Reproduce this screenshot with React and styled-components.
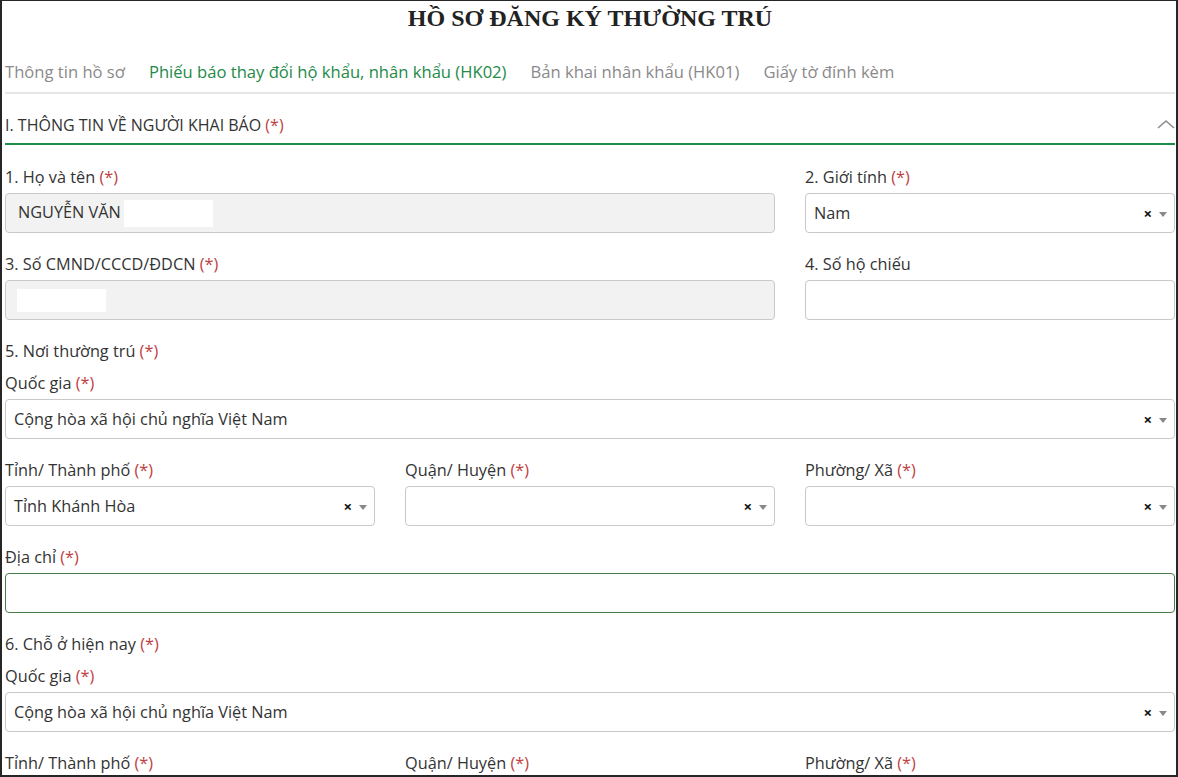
import React from 'react'
import styled, { createGlobalStyle } from 'styled-components'

const GlobalStyle = createGlobalStyle`
  * { box-sizing: border-box; }
  body {
    margin: 0;
    background: #fff;
    font-family: 'Open Sans', 'Noto Sans', sans-serif;
  }
`

const Frame = styled.div`
  width: 1178px;
  height: 777px;
  overflow: hidden;
  border: 2px solid #262626;
  border-width: 1px 2px 2px 2px;
  padding: 0 1px 0 3px;
  background: #fff;
`

const Title = styled.h1`
  margin: 0;
  height: 34px;
  line-height: 34px;
  text-align: center;
  font-family: 'Liberation Serif', 'DejaVu Serif', serif;
  font-weight: 700;
  font-size: 24px;
  color: #222;
`

const Tabs = styled.div`
  display: flex;
  gap: 24px;
  height: 59px;
  padding-top: 15px;
  align-items: center;
  border-bottom: 2px solid #e6e6e6;
`

const Tab = styled.div`
  font-size: 16.6px;
  color: ${(p) => (p.active ? '#248a47' : '#8a8a8a')};
`

const SectionHead = styled.div`
  display: flex;
  justify-content: space-between;
  align-items: flex-end;
  height: 51px;
  padding-bottom: 7px;
  border-bottom: 2px solid #1f8c4b;
  font-size: 16px;
  color: #333;
`

const Chevron = styled.svg`
  margin-bottom: 7px;
`

const Req = styled.span`
  color: #c0403f;
`

const Grid = styled.div`
  display: grid;
  grid-template-columns: repeat(3, 370px);
  column-gap: 30px;
  row-gap: 20px;
  padding-top: 21px;
`

const Field = styled.div`
  grid-column: span ${(p) => p.span || 1};
  display: flex;
  flex-direction: column;
  gap: 5px;
`

const Group = styled.div`
  grid-column: span 3;
  display: flex;
  flex-direction: column;
  gap: 10px;
`

const Label = styled.div`
  height: 22px;
  line-height: 22px;
  font-size: 16.3px;
  color: #333;
`

const Box = styled.div`
  height: 40px;
  display: flex;
  align-items: center;
  border: 1px solid ${(p) => (p.focus ? '#4b7a4b' : '#c9c9c9')};
  border-radius: 4px;
  background: ${(p) => (p.disabled ? '#f2f2f2' : '#fff')};
  padding: 0 ${(p) => (p.disabled ? '12px' : '8px')};
  font-size: 16.3px;
  color: #333;
`

const Value = styled.span`
  flex: 1;
  white-space: nowrap;
`

const Redact = styled.span`
  display: inline-block;
  vertical-align: middle;
  background: #fff;
  width: ${(p) => p.w}px;
  height: ${(p) => p.h}px;
  margin-left: ${(p) => p.ml || 0}px;
`

const Controls = styled.span`
  display: flex;
  align-items: center;
  gap: 7px;
  margin-right: -1px;
`

const Clear = styled.span`
  font-size: 15px;
  font-weight: 700;
  color: #111;
  line-height: 1;
`

const Caret = styled.span`
  width: 0;
  height: 0;
  border-left: 4px solid transparent;
  border-right: 4px solid transparent;
  border-top: 5px solid #888;
  margin-top: 2px;
`

const L = ({ text, req }) => (
  <Label>
    {text}
    {req && <Req> (*)</Req>}
  </Label>
)

const Select = ({ value }) => (
  <Box>
    <Value>{value}</Value>
    <Controls>
      <Clear>×</Clear>
      <Caret />
    </Controls>
  </Box>
)

const AddressBlock = ({ title, province }) => (
  <>
    <Group>
      <L text={title} req />
      <Field>
        <L text="Quốc gia" req />
        <Select value="Cộng hòa xã hội chủ nghĩa Việt Nam" />
      </Field>
    </Group>
    <Field>
      <L text="Tỉnh/ Thành phố" req />
      <Select value={province} />
    </Field>
    <Field>
      <L text="Quận/ Huyện" req />
      <Select value="" />
    </Field>
    <Field>
      <L text="Phường/ Xã" req />
      <Select value="" />
    </Field>
  </>
)

export default function App() {
  return (
    <Frame>
      <GlobalStyle />
      <Title>HỒ SƠ ĐĂNG KÝ THƯỜNG TRÚ</Title>
      <Tabs>
        <Tab>Thông tin hồ sơ</Tab>
        <Tab active>Phiếu báo thay đổi hộ khẩu, nhân khẩu (HK02)</Tab>
        <Tab>Bản khai nhân khẩu (HK01)</Tab>
        <Tab>Giấy tờ đính kèm</Tab>
      </Tabs>
      <SectionHead>
        <span>
          I. THÔNG TIN VỀ NGƯỜI KHAI BÁO<Req> (*)</Req>
        </span>
        <Chevron width="18" height="10" viewBox="0 0 18 10">
          <polyline points="1,9 9,2 17,9" fill="none" stroke="#8d8d8d" strokeWidth="1.6" />
        </Chevron>
      </SectionHead>
      <Grid>
        <Field span={2}>
          <L text="1. Họ và tên" req />
          <Box disabled>
            <Value>
              NGUYỄN VĂN
              <Redact w={89} h={27} ml={3} />
            </Value>
          </Box>
        </Field>
        <Field>
          <L text="2. Giới tính" req />
          <Select value="Nam" />
        </Field>
        <Field span={2}>
          <L text="3. Số CMND/CCCD/ĐDCN" req />
          <Box disabled>
            <Value>
              <Redact w={89} h={23} ml={-1} />
            </Value>
          </Box>
        </Field>
        <Field>
          <L text="4. Số hộ chiếu" />
          <Box />
        </Field>
        <AddressBlock title="5. Nơi thường trú" province="Tỉnh Khánh Hòa" />
        <Field span={3}>
          <L text="Địa chỉ" req />
          <Box focus />
        </Field>
        <AddressBlock title="6. Chỗ ở hiện nay" province="" />
      </Grid>
    </Frame>
  )
}
